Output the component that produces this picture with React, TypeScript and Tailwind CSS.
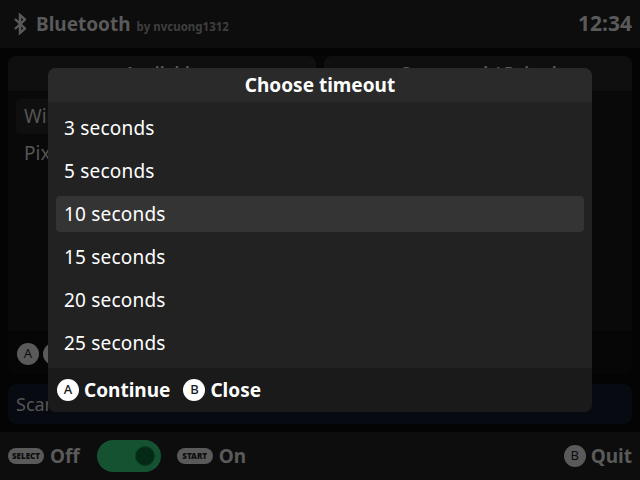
const font = { fontFamily: '"Noto Sans", "Open Sans", sans-serif' };

const timeouts = [3, 5, 10, 15, 20, 25];

function DimButton({ label }: { label: string }) {
  return (
    <span className="flex h-[22px] w-[22px] items-center justify-center rounded-full bg-[#5a5a5a] text-[13px] text-[#0d0d0d]">
      {label}
    </span>
  );
}

function PillLabel({ label }: { label: string }) {
  return (
    <span className="flex h-4 w-9 items-center justify-center rounded-full bg-[#5a5a5a] text-[8px] font-black text-[#0d0d0d]">
      {label}
    </span>
  );
}

function LightButton({ label, text }: { label: string; text: string }) {
  return (
    <div className="flex items-center gap-[5px]">
      <span className="flex h-[22px] w-[22px] items-center justify-center rounded-full bg-white text-[13px] font-medium text-[#1a1a1a]">
        {label}
      </span>
      <span className="text-[19px] font-bold text-white">{text}</span>
    </div>
  );
}

function BluetoothIcon() {
  return (
    <svg width="12" height="22" viewBox="0 0 12 22" fill="none" stroke="#5a5a5a" strokeWidth="2.4">
      <path d="M1 6l10 9.5-5 4.5V2l5 4.5L1 16" />
    </svg>
  );
}

export default function App() {
  return (
    <div className="relative flex h-[480px] w-[640px] flex-col overflow-hidden bg-[#040404]" style={font}>
      {/* Header */}
      <header className="flex h-12 items-center justify-between bg-[#0d0d0d] pl-[14px] pr-2">
        <div className="flex items-center gap-[10px]">
          <BluetoothIcon />
          <div className="flex items-baseline gap-[6px]">
            <span className="text-[19px] font-bold text-[#5a5a5a]">Bluetooth</span>
            <span className="text-[11.5px] font-bold text-[#3f3f3f]">by nvcuong1312</span>
          </div>
        </div>
        <span className="text-[21px] font-bold text-[#5a5a5a]">12:34</span>
      </header>

      {/* Page behind the dialog */}
      <main className="flex flex-1 flex-col gap-[10px] px-2 py-2">
        <div className="flex h-[318px] flex-col rounded-lg bg-[#060606]">
          <div className="flex gap-2">
            <div className="flex h-[35px] flex-1 justify-center rounded-t-lg bg-[#0f0f0f] pt-[5px] text-[17px] font-semibold text-[#5a5a5a]">
              Available
            </div>
            <div className="flex h-[35px] flex-1 justify-center rounded-t-lg bg-[#0f0f0f] pt-[5px] text-[17px] font-semibold text-[#5a5a5a]">
              Connected / Paired
            </div>
          </div>
          <div className="flex h-60 flex-col gap-[2px] bg-[#090909] p-2 text-[19px] text-[#555555]">
            <div className="flex h-[35px] w-[300px] items-center rounded bg-[#0f0f0f] px-2">Wireless</div>
            <div className="flex h-[35px] w-[300px] items-center px-2">Pixel Buds</div>
          </div>
          <div className="flex flex-1 items-center gap-1 pl-[9px] pt-[2px]">
            <DimButton label="A" />
            <DimButton label="C" />
          </div>
        </div>
        <div className="flex h-10 items-center rounded-lg bg-[#070a10] px-2 text-[18px] text-[#555555]">
          Scan
        </div>
      </main>

      {/* Footer */}
      <footer className="flex h-12 items-center justify-between bg-[#0d0d0d] pl-2 pr-2">
        <div className="flex items-center">
          <PillLabel label="SELECT" />
          <span className="ml-[6px] text-[19px] font-bold text-[#5a5a5a]">Off</span>
          <div className="ml-[17px] flex h-8 w-16 items-center justify-end rounded-full bg-[#145231] pr-[6px]">
            <span className="h-5 w-5 rounded-full border border-[#0a3d22] bg-[#042a15]" />
          </div>
          <div className="ml-4">
            <PillLabel label="START" />
          </div>
          <span className="ml-[6px] text-[19px] font-bold text-[#5a5a5a]">On</span>
        </div>
        <div className="flex items-center gap-[5px]">
          <DimButton label="B" />
          <span className="text-[19px] font-bold text-[#5a5a5a]">Quit</span>
        </div>
      </footer>

      {/* Timeout dialog */}
      <div className="absolute left-12 top-[68px] flex h-[344px] w-[544px] flex-col overflow-hidden rounded-lg bg-[#222222]">
        <div className="flex h-[34px] items-center justify-center bg-[#2a2a2a] text-[19px] font-bold text-white">
          Choose timeout
        </div>
        <ul className="flex flex-1 flex-col gap-[7px] px-2 pt-2">
          {timeouts.map((t) => (
            <li
              key={t}
              className={`flex h-9 items-center rounded px-2 text-[19px] tracking-[0.2px] text-white ${t === 10 ? 'bg-[#343434]' : ''}`}
            >
              {t} seconds
            </li>
          ))}
        </ul>
        <div className="flex h-11 items-center gap-[13px] bg-[#1a1a1a] pl-[9px]">
          <LightButton label="A" text="Continue" />
          <LightButton label="B" text="Close" />
        </div>
      </div>
    </div>
  );
}
